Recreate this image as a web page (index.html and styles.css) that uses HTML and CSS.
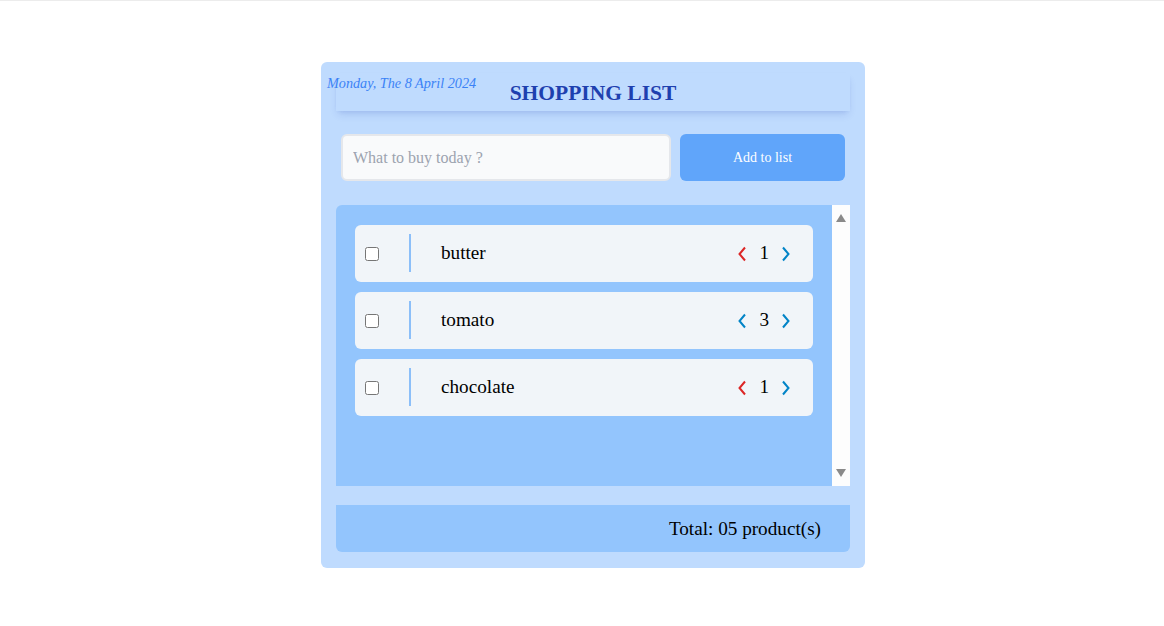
FILE: index.html
```html
<!DOCTYPE html>
<html>
<head>
<meta charset="utf-8">
<link rel="stylesheet" href="styles.css">
</head>
<body>
<div class="top-line"></div>
<div class="page">
  <div class="card">
    <div class="date">Monday, The 8 April 2024</div>
    <div class="header"><h1 class="title">SHOPPING LIST</h1></div>
    <div class="add-row">
      <input class="add-input" type="text" placeholder="What to buy today ?">
      <button class="add-btn">Add to list</button>
    </div>
    <div class="list-area">
      <div class="list">
        <div class="item">
          <input type="checkbox" class="check">
          <span class="divider"></span>
          <span class="name">butter</span>
          <div class="qty">
            <svg class="chev dec" viewBox="0 0 10 16" width="10" height="16"><path d="M8 1.5 L2.5 8 L8 14.5" fill="none" stroke="currentColor" stroke-width="2"/></svg>
            <span class="num">1</span>
            <svg class="chev inc" viewBox="0 0 10 16" width="10" height="16"><path d="M2 1.5 L7.5 8 L2 14.5" fill="none" stroke="currentColor" stroke-width="2"/></svg>
          </div>
        </div>
        <div class="item">
          <input type="checkbox" class="check">
          <span class="divider"></span>
          <span class="name">tomato</span>
          <div class="qty">
            <svg class="chev inc" viewBox="0 0 10 16" width="10" height="16"><path d="M8 1.5 L2.5 8 L8 14.5" fill="none" stroke="currentColor" stroke-width="2"/></svg>
            <span class="num">3</span>
            <svg class="chev inc" viewBox="0 0 10 16" width="10" height="16"><path d="M2 1.5 L7.5 8 L2 14.5" fill="none" stroke="currentColor" stroke-width="2"/></svg>
          </div>
        </div>
        <div class="item">
          <input type="checkbox" class="check">
          <span class="divider"></span>
          <span class="name">chocolate</span>
          <div class="qty">
            <svg class="chev dec" viewBox="0 0 10 16" width="10" height="16"><path d="M8 1.5 L2.5 8 L8 14.5" fill="none" stroke="currentColor" stroke-width="2"/></svg>
            <span class="num">1</span>
            <svg class="chev inc" viewBox="0 0 10 16" width="10" height="16"><path d="M2 1.5 L7.5 8 L2 14.5" fill="none" stroke="currentColor" stroke-width="2"/></svg>
          </div>
        </div>
      </div>
      <div class="scrollbar">
        <span class="arrow-up"></span>
        <span class="arrow-down"></span>
      </div>
    </div>
    <div class="footer">Total: 05 product(s)</div>
  </div>
</div>
</body>
</html>
```

FILE: styles.css
```css
html, body {
  margin: 0;
  padding: 0;
  background: #ffffff;
  font-family: "Liberation Serif", "Times New Roman", serif;
}

.top-line {
  height: 1px;
  background: #ececec;
}

.page {
  display: flex;
  justify-content: center;
  padding-top: 61px;
  padding-left: 22px;
}

.card {
  position: relative;
  width: 544px;
  box-sizing: border-box;
  background: #bfdbfe;
  border-radius: 6px;
  padding: 11px 15px 16px;
  display: flex;
  flex-direction: column;
}

.date {
  position: absolute;
  left: 6px;
  top: 13px;
  font-size: 14.2px;
  font-style: italic;
  color: #3b82f6;
  line-height: 16px;
}

.header {
  height: 38px;
  background: #bfdbfe;
  box-shadow: 0 5px 8px -2px rgba(30, 64, 175, 0.16), 0 2px 4px -2px rgba(30, 64, 175, 0.1);
  display: flex;
  align-items: center;
  justify-content: center;
}

.title {
  margin: 0;
  font-size: 21.5px;
  font-weight: bold;
  color: #1e40af;
  line-height: 38px;
  padding-top: 2px;
}

.add-row {
  display: flex;
  gap: 9px;
  padding: 0 5px;
  margin-top: 23px;
}

.add-input {
  width: 330px;
  height: 47px;
  box-sizing: border-box;
  border: 2px solid #e5e7eb;
  border-radius: 6px;
  background: #f9fafb;
  padding: 0 10px;
  font-family: "Liberation Serif", "Times New Roman", serif;
  font-size: 16px;
  color: #111827;
  outline: none;
}

.add-input::placeholder {
  color: #9ca3af;
}

.add-btn {
  flex: 1;
  height: 47px;
  border: none;
  border-radius: 6px;
  background: #60a5fa;
  color: #ffffff;
  font-family: "Liberation Serif", "Times New Roman", serif;
  font-size: 14px;
}

.list-area {
  margin-top: 24px;
  height: 281px;
  display: flex;
  background: #93c5fd;
  border-top-left-radius: 6px;
}

.list {
  flex: 1;
  padding: 20px 19px;
  display: flex;
  flex-direction: column;
  gap: 10px;
}

.item {
  height: 57px;
  background: #f1f5f9;
  border-radius: 6px;
  display: flex;
  align-items: center;
  padding: 0 22px 0 10px;
}

.check {
  margin: 0;
  width: 14px;
  height: 14px;
}

.divider {
  width: 2px;
  height: 38px;
  background: #8cbff9;
  margin-left: 30px;
  margin-right: 30px;
  margin-top: -1px;
}

.name {
  flex: 1;
  font-size: 19.2px;
  color: #000000;
  margin-top: -1px;
}

.qty {
  display: flex;
  align-items: center;
  gap: 12px;
}

.num {
  font-size: 19.2px;
  color: #000000;
  margin-top: -1px;
}

.chev {
  display: block;
}

.chev.dec {
  color: #dc2626;
}

.chev.inc {
  color: #0284c7;
}

.scrollbar {
  width: 18px;
  background: #fdfdfd;
  display: flex;
  flex-direction: column;
  justify-content: space-between;
  align-items: center;
  padding: 9px 0 9px;
}

.arrow-up {
  width: 0;
  height: 0;
  border-left: 5px solid transparent;
  border-right: 5px solid transparent;
  border-bottom: 8px solid #8a8a8a;
}

.arrow-down {
  width: 0;
  height: 0;
  border-left: 5px solid transparent;
  border-right: 5px solid transparent;
  border-top: 8px solid #8a8a8a;
}

.footer {
  margin-top: 19px;
  height: 47px;
  background: #93c5fd;
  border-radius: 0 0 6px 6px;
  display: flex;
  align-items: center;
  justify-content: flex-end;
  padding-right: 29px;
  font-size: 19.2px;
  color: #000000;
}
```
